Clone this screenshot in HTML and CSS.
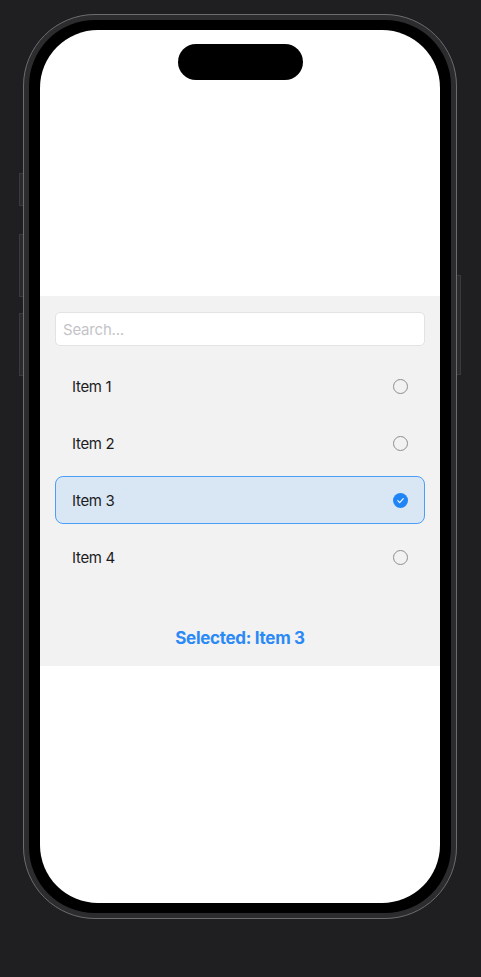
FILE: index.html
```html
<!DOCTYPE html>
<html>
<head>
<meta charset="utf-8">
<link rel="stylesheet" href="styles.css">
</head>
<body>
<div class="phone">
  <span class="btn btn-l1"></span>
  <span class="btn btn-l2"></span>
  <span class="btn btn-l3"></span>
  <span class="btn btn-r1"></span>
  <div class="bezel">
    <div class="screen">
      <div class="island"></div>
      <div class="top-space"></div>
      <div class="panel">
        <div class="search">Search...</div>
        <div class="list">
          <div class="row"><span>Item 1</span><span class="radio"></span></div>
          <div class="row"><span>Item 2</span><span class="radio"></span></div>
          <div class="row selected"><span>Item 3</span>
            <svg class="check" width="15" height="15" viewBox="0 0 15 15"><circle cx="7.5" cy="7.5" r="7.5" fill="#1f85f7"/><path d="M4.8 7.7 L6.7 9.6 L10.3 5.6" fill="none" stroke="#fff" stroke-width="1.1" stroke-linecap="round" stroke-linejoin="round"/></svg>
          </div>
          <div class="row"><span>Item 4</span><span class="radio"></span></div>
        </div>
        <div class="result">Selected: Item 3</div>
      </div>
    </div>
  </div>
</div>
</body>
</html>
```
FILE: styles.css
```css
html, body {
  margin: 0;
  padding: 0;
  background: #1f1f21;
  font-family: Inter, "Liberation Sans", sans-serif;
}
body {
  padding-top: 14px;
  padding-left: 23px;
  height: 977px;
  box-sizing: border-box;
}
.phone {
  position: relative;
  width: 434px;
  height: 905px;
  box-sizing: border-box;
  border: 1px solid #6c6c6e;
  border-radius: 72px;
  background: #2c2c2e;
  padding: 5px;
}
.btn {
  position: absolute;
  width: 4px;
  background: #2a2a2c;
  border: 1px solid #3a3a3c;
  box-sizing: border-box;
}
.btn-l1 { left: -5px; top: 158px; height: 33px; border-right: none; }
.btn-l2 { left: -5px; top: 219px; height: 63px; border-right: none; }
.btn-l3 { left: -5px; top: 298px; height: 63px; border-right: none; }
.btn-r1 { right: -5px; top: 260px; height: 100px; border-left: none; }
.bezel {
  height: 100%;
  box-sizing: border-box;
  background: #000;
  border-radius: 66px;
  padding: 10px 11px;
}
.screen {
  position: relative;
  height: 100%;
  background: #fff;
  border-radius: 58px;
  overflow: hidden;
  display: flex;
  flex-direction: column;
}
.island {
  position: absolute;
  top: 14px;
  left: 50%;
  margin-left: -62px;
  width: 125px;
  height: 36px;
  border-radius: 18px;
  background: #000;
}
.top-space {
  height: 266px;
  flex: none;
}
.panel {
  background: #f2f2f2;
  padding: 16px 15px 0;
  height: 370px;
  box-sizing: border-box;
  display: flex;
  flex-direction: column;
}
.search {
  height: 34px;
  box-sizing: border-box;
  background: #fff;
  border: 1px solid #e3e3e5;
  border-radius: 5px;
  padding-left: 7px;
  display: flex;
  align-items: center;
  color: #c4c4c7;
  font-size: 15px;
  letter-spacing: -0.2px;
}
.list {
  margin-top: 16px;
  display: flex;
  flex-direction: column;
  gap: 9px;
}
.row {
  height: 48px;
  box-sizing: border-box;
  display: flex;
  align-items: center;
  justify-content: space-between;
  padding: 0 16px 0 16px;
  font-size: 15px;
  letter-spacing: -0.3px;
  color: #1c1c1e;
  border: 1.5px solid transparent;
  border-radius: 8px;
}
.row.selected {
  background: #d9e6f4;
  border-color: #4c9ff6;
}
.radio {
  width: 15px;
  height: 15px;
  box-sizing: border-box;
  border: 1.3px solid #8e8e93;
  border-radius: 50%;
}
.check { display: block; }
.result {
  margin-top: 47px;
  text-align: center;
  font-size: 17px;
  font-weight: 700;
  letter-spacing: -0.3px;
  color: #2a89f6;
  line-height: 20px;
}
```
